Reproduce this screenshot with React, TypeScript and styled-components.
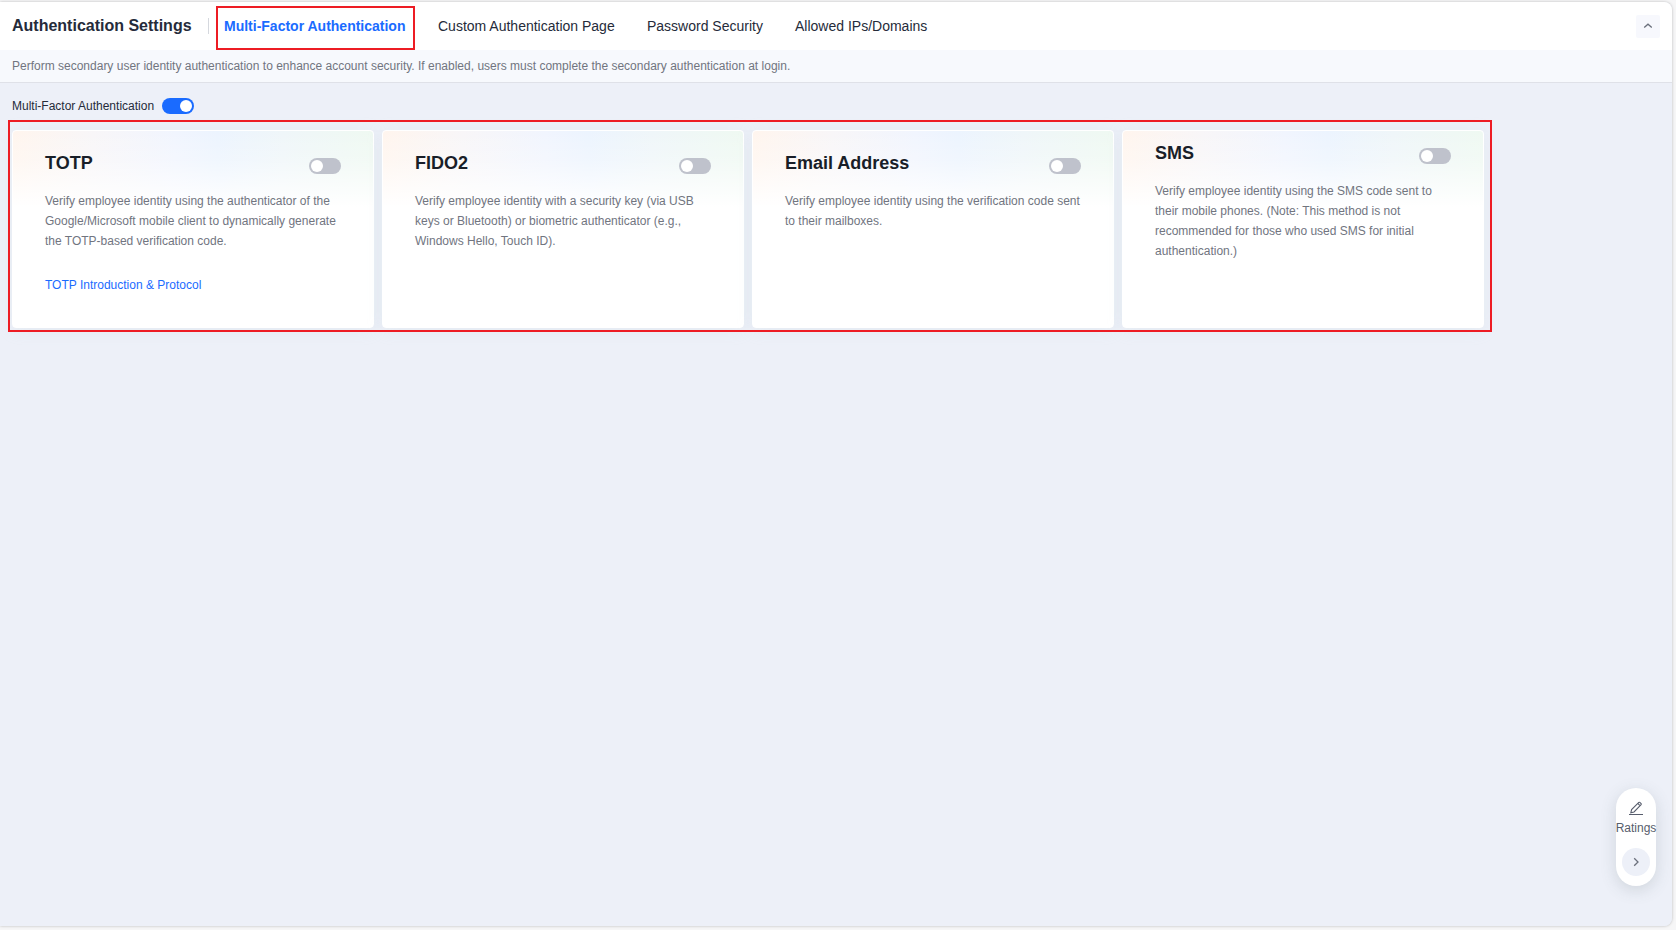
import React from "react";
import styled, { createGlobalStyle } from "styled-components";

const GlobalStyle = createGlobalStyle`
  * { box-sizing: border-box; }
  body {
    margin: 0;
    background: #f6f6f7;
    font-family: "Liberation Sans", Arial, sans-serif;
    font-size: 12px;
    color: #252b3a;
  }
  h1, h2, p { margin: 0; }
`;

const Page = styled.div`
  position: relative;
  width: 1676px;
  height: 930px;
  padding-top: 2px;
  overflow: hidden;
`;

const Panel = styled.main`
  width: 1672px;
  height: 924px;
  display: flex;
  flex-direction: column;
  background: #edf0f8;
  border-radius: 0 8px 8px 0;
  overflow: hidden;
  box-shadow: 0 0 3px rgba(0, 0, 0, 0.25);
`;

const Header = styled.header`
  flex: none;
  height: 48px;
  display: flex;
  align-items: center;
  padding: 0 12px;
  background: #fff;
`;

const Title = styled.h1`
  width: 197px;
  height: 16px;
  line-height: 16px;
  border-right: 1px solid #d5d8de;
  font-size: 16px;
  white-space: nowrap;
`;

const Tabs = styled.nav`
  flex: 1;
  display: flex;
  gap: 32px;
  padding-left: 15px;
`;

const Tab = styled.a<{ $active?: boolean; $width: number }>`
  width: ${(p) => p.$width}px;
  line-height: 20px;
  font-size: 14px;
  font-weight: ${(p) => (p.$active ? 700 : 400)};
  color: ${(p) => (p.$active ? "#1a6bff" : "#252b3a")};
  white-space: nowrap;
`;

const CollapseButton = styled.button`
  width: 24px;
  height: 23px;
  display: grid;
  place-items: center;
  padding: 0;
  border: 0;
  border-radius: 2px;
  background: #f7f8fd;
`;

const Hint = styled.p`
  flex: none;
  height: 33px;
  padding: 0 12px;
  line-height: 32px;
  background: #f7f9fd;
  border-bottom: 1px solid #dfe1e8;
  color: #71757f;
`;

const Content = styled.section`
  flex: 1;
  padding: 13px 12px;
  background: #edf0f8;
`;

const MasterRow = styled.div`
  display: flex;
  align-items: center;
  gap: 8px;
  height: 20px;
`;

const MasterLabel = styled.span`
  width: 142px;
  white-space: nowrap;
`;

const Switch = styled.button<{ $on?: boolean }>`
  flex: none;
  width: 32px;
  height: 16px;
  display: flex;
  justify-content: ${(p) => (p.$on ? "flex-end" : "flex-start")};
  padding: 2px;
  border: 0;
  border-radius: 8px;
  background: ${(p) => (p.$on ? "#1a6bff" : "#bfc2cc")};
  &::before {
    content: "";
    width: 12px;
    height: 12px;
    border-radius: 50%;
    background: #fff;
  }
`;

const Cards = styled.div`
  display: grid;
  grid-template-columns: repeat(4, 362px);
  gap: 8px;
  margin-top: 14px;
`;

const Card = styled.article<{ $raised?: boolean }>`
  height: 198px;
  padding: ${(p) => (p.$raised ? 12 : 22)}px 32px 0;
  border: 1px solid #fff;
  border-radius: 4px;
  box-shadow: 0 2px 16px rgba(190, 210, 215, 0.18);
  background:
    linear-gradient(180deg, rgba(255, 255, 255, 0) 0, rgba(255, 255, 255, 0.25) 30px, #fff 76px),
    linear-gradient(90deg, #fff5ee 0, #f8f6f8 22%, #f1f5fe 45%, #ecf4fe 57%, #eff6f9 75%, #eff9f2 100%);
`;

const CardHead = styled.div`
  display: flex;
  justify-content: space-between;
  height: 38px;
  padding-top: 5px;
`;

const CardTitle = styled.h2`
  margin-top: -5px;
  line-height: 21px;
  font-size: 18px;
  color: #191e28;
`;

const Description = styled.p`
  width: 300px;
  line-height: 20px;
  color: #71757f;
  white-space: pre-line;
`;

const DocLink = styled.a`
  display: block;
  margin-top: 24px;
  line-height: 20px;
  color: #1a6bff;
`;

const Highlight = styled.div<{ $x: number; $y: number; $w: number; $h: number }>`
  position: absolute;
  left: ${(p) => p.$x}px;
  top: ${(p) => p.$y}px;
  width: ${(p) => p.$w}px;
  height: ${(p) => p.$h}px;
  border: 2px solid #ed1c24;
  pointer-events: none;
`;

const RatingWidget = styled.aside`
  position: absolute;
  left: 1616px;
  top: 788px;
  width: 40px;
  height: 98px;
  display: flex;
  flex-direction: column;
  align-items: center;
  padding-top: 13px;
  border-radius: 20px;
  background: #fff;
  box-shadow: 0 4px 16px rgba(70, 90, 95, 0.18);
  color: #575d6c;
`;

const RatingLabel = styled.span`
  line-height: 16px;
  margin: 3px 0 12px;
  white-space: nowrap;
`;

const RatingNext = styled.button`
  width: 28px;
  height: 28px;
  display: grid;
  place-items: center;
  padding: 0;
  border: 0;
  border-radius: 50%;
  background: #edf0f8;
`;

const methods = [
  {
    title: "TOTP",
    text: "Verify employee identity using the authenticator of the\nGoogle/Microsoft mobile client to dynamically generate\nthe TOTP-based verification code.",
    link: "TOTP Introduction & Protocol",
  },
  {
    title: "FIDO2",
    text: "Verify employee identity with a security key (via USB\nkeys or Bluetooth) or biometric authenticator (e.g.,\nWindows Hello, Touch ID).",
  },
  {
    title: "Email Address",
    text: "Verify employee identity using the verification code sent\nto their mailboxes.",
  },
  {
    title: "SMS",
    text: "Verify employee identity using the SMS code sent to\ntheir mobile phones. (Note: This method is not\nrecommended for those who used SMS for initial\nauthentication.)",
    raised: true,
  },
];

export default function App() {
  return (
    <Page>
      <GlobalStyle />
      <Panel>
        <Header>
          <Title>Authentication Settings</Title>
          <Tabs>
            <Tab $active $width={182}>Multi-Factor Authentication</Tab>
            <Tab $width={177}>Custom Authentication Page</Tab>
            <Tab $width={116}>Password Security</Tab>
            <Tab $width={133}>Allowed IPs/Domains</Tab>
          </Tabs>
          <CollapseButton aria-label="Collapse">
            <svg width="10" height="6" viewBox="0 0 10 6" fill="none" stroke="#6b707c" strokeWidth="1.3">
              <path d="M1.2 4.6 5 1.2l3.8 3.4" />
            </svg>
          </CollapseButton>
        </Header>
        <Hint>
          Perform secondary user identity authentication to enhance account security. If enabled, users must complete the
          secondary authentication at login.
        </Hint>
        <Content>
          <MasterRow>
            <MasterLabel>Multi-Factor Authentication</MasterLabel>
            <Switch $on aria-label="Multi-Factor Authentication" />
          </MasterRow>
          <Cards>
            {methods.map((m) => (
              <Card key={m.title} $raised={m.raised}>
                <CardHead>
                  <CardTitle>{m.title}</CardTitle>
                  <Switch aria-label={m.title} />
                </CardHead>
                <Description>{m.text}</Description>
                {m.link && <DocLink>{m.link}</DocLink>}
              </Card>
            ))}
          </Cards>
        </Content>
      </Panel>
      <Highlight $x={216} $y={6} $w={199} $h={44} />
      <Highlight $x={8} $y={120} $w={1484} $h={212} />
      <RatingWidget>
        <svg width="16" height="16" viewBox="0 0 16 16" fill="none" stroke="#575d6c" strokeWidth="1.1">
          <path d="M1 13.5h14M2.8 11.8l.8-3.2 7.2-7.2q.5-.4 1 0l1.3 1.3q.4.5 0 1L6 11zM10 2.6l2 2" />
        </svg>
        <RatingLabel>Ratings</RatingLabel>
        <RatingNext aria-label="Next">
          <svg width="6" height="10" viewBox="0 0 6 10" fill="none" stroke="#6b707c" strokeWidth="1.3">
            <path d="M1.2 1.2 5 5 1.2 8.8" />
          </svg>
        </RatingNext>
      </RatingWidget>
    </Page>
  );
}
